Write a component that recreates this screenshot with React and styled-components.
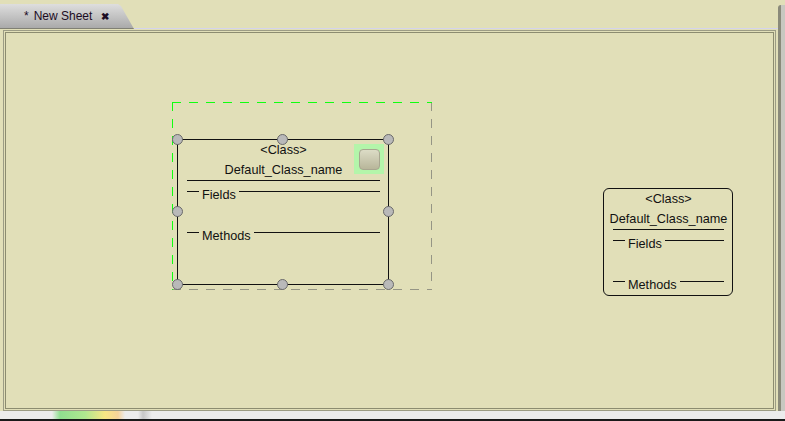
import React from "react";
import styled, { createGlobalStyle } from "styled-components";

const GlobalStyle = createGlobalStyle`
  html, body { margin: 0; padding: 0; background: #e1dfb8; overflow: hidden; }
  * { box-sizing: border-box; }
`;

const Screen = styled.div`
  position: relative;
  width: 785px;
  height: 421px;
  display: flex;
  flex-direction: column;
  background: #e1dfb8;
  font-family: "Liberation Sans", Arial, sans-serif;
`;

const TabStrip = styled.div`
  height: 29px;
  display: flex;
  align-items: flex-end;
`;

const Tab = styled.div`
  width: 134px;
  height: 25px;
  display: flex;
  align-items: center;
  padding-left: 24px;
  gap: 5px;
  font-size: 12px;
  color: #1c0c24;
  background: linear-gradient(#dedede, #aaaaaa);
  border-bottom: 1px solid #808074;
  clip-path: polygon(0 0, 118px 0, 121px 2px, 134px 25px, 0 25px);
`;

const CloseMark = styled.span`
  margin-left: 4px;
  font-weight: bold;
  font-size: 10px;
`;

const TabLine = styled.div`
  flex: 1;
  height: 1px;
  margin-right: 7px;
  background: #d4d4ec;
`;

const Body = styled.div`
  flex: 1;
  display: flex;
  padding: 1px 0 0 3px;
`;

const Frame = styled.div`
  width: 775px;
  border: 1px solid #9c9c84;
  padding: 1px;
  background: #e1dfb8;
`;

const Canvas = styled.div`
  position: relative;
  height: 100%;
  border: 1px solid #8c8c70;
`;

const SideEdge = styled.div`
  width: 7px;
  margin-top: -25px;
  margin-left: 2px;
  border-left: 3px solid #8a8a7a;
  border-top-left-radius: 3px;
  background: #c8c8c0;
`;

const Taskbar = styled.div`
  height: 10px;
  border-bottom: 2px solid #1a1a1a;
  background:
    linear-gradient(90deg, transparent 0, transparent 52px, rgba(120, 220, 120, 0.8) 60px,
      rgba(160, 230, 120, 0.8) 85px, rgba(250, 230, 120, 0.9) 105px, rgba(250, 200, 120, 0.7) 118px,
      transparent 125px, transparent 138px, rgba(190, 190, 190, 0.8) 143px, transparent 152px),
    #ececec;
`;

const green = "#10ff10";
const grey = "#959585";
const dashH = (c) => `repeating-linear-gradient(90deg, ${c} 0 9px, transparent 9px 17px)`;
const dashV = (c) => `repeating-linear-gradient(180deg, ${c} 0 9px, transparent 9px 17px)`;

const Marquee = styled.div`
  position: absolute;
  left: ${(p) => p.$x}px;
  top: ${(p) => p.$y}px;
  width: ${(p) => p.$w}px;
  height: ${(p) => p.$h}px;
  background-image: ${dashH(green)}, ${dashV(green)}, ${dashV(grey)}, ${dashH(grey)};
  background-size: 100% 1px, 1px 100%, 1px 100%, 100% 1px;
  background-position: left top, left top, right top, left bottom;
  background-repeat: no-repeat;
`;

const Node = styled.div`
  position: absolute;
  left: ${(p) => p.$x}px;
  top: ${(p) => p.$y}px;
  width: ${(p) => p.$w}px;
  height: ${(p) => p.$h}px;
  border: 1px solid #111;
  border-radius: ${(p) => (p.$rounded ? "6px" : "0")};
  padding: 0 8px 0 9px;
  display: flex;
  flex-direction: column;
  font-size: 12.7px;
  color: #111;
`;

const Stereotype = styled.div`
  height: 20px;
  line-height: 20px;
  display: flex;
  justify-content: center;
  white-space: nowrap;
`;

const ClassName = styled.div`
  height: 21px;
  line-height: 20px;
  display: flex;
  justify-content: center;
  white-space: nowrap;
  border-bottom: 1px solid #111;
`;

const Section = styled.div`
  display: flex;
  height: 14px;
  line-height: 14px;
  margin-top: ${(p) => p.$gap}px;
`;

const Rule = styled.span`
  height: 1px;
  margin-top: 3px;
  background: #111;
  width: ${(p) => (p.$grow ? "auto" : "12px")};
  flex: ${(p) => (p.$grow ? 1 : "none")};
`;

const SectionLabel = styled.span`
  padding: 0 3px;
`;

const Handle = styled.div`
  position: absolute;
  width: 11px;
  height: 11px;
  border-radius: 50%;
  background: #b9b9b9;
  border: 1px solid #6a6a6a;
  left: ${(p) => p.$x}px;
  top: ${(p) => p.$y}px;
`;

const Toggle = styled.div`
  position: absolute;
  top: 4px;
  right: 4px;
  width: 30px;
  height: 30px;
  background: #b4f5aa;
  display: flex;
  align-items: center;
  justify-content: center;
`;

const ToggleKnob = styled.div`
  width: 21px;
  height: 21px;
  border-radius: 4px;
  border: 1px solid #a8a690;
  background: linear-gradient(#dcdcc6, #b8b69a);
`;

function ClassBox({ x, y, w, h, rounded, children }) {
  return (
    <Node $x={x} $y={y} $w={w} $h={h} $rounded={rounded}>
      <Stereotype>&lt;Class&gt;</Stereotype>
      <ClassName>Default_Class_name</ClassName>
      <Section $gap={7}>
        <Rule />
        <SectionLabel>Fields</SectionLabel>
        <Rule $grow />
      </Section>
      <Section $gap={27}>
        <Rule />
        <SectionLabel>Methods</SectionLabel>
        <Rule $grow />
      </Section>
      {children}
    </Node>
  );
}

export default function App() {
  const w = 212;
  const h = 146;
  const xs = [0, (w - 1) / 2, w - 1];
  const ys = [0, (h - 1) / 2, h - 1];
  const handles = [
    [xs[0], ys[0]], [xs[1], ys[0]], [xs[2], ys[0]],
    [xs[0], ys[1]], [xs[2], ys[1]],
    [xs[0], ys[2]], [xs[1], ys[2]], [xs[2], ys[2]],
  ];
  return (
    <>
      <GlobalStyle />
      <Screen>
        <TabStrip>
          <Tab>
            <span>*</span>
            <span>New Sheet</span>
            <CloseMark>✖</CloseMark>
          </Tab>
          <TabLine />
        </TabStrip>
        <Body>
          <Frame>
            <Canvas>
              <Marquee $x={166} $y={69} $w={260} $h={188} />
              <ClassBox x={171} y={106} w={w} h={h}>
                <Toggle>
                  <ToggleKnob />
                </Toggle>
                {handles.map(([hx, hy], i) => (
                  <Handle key={i} $x={hx - 6.5} $y={hy - 6.5} />
                ))}
              </ClassBox>
              <ClassBox x={597} y={155} w={130} h={108} rounded />
            </Canvas>
          </Frame>
          <SideEdge />
        </Body>
        <Taskbar />
      </Screen>
    </>
  );
}
